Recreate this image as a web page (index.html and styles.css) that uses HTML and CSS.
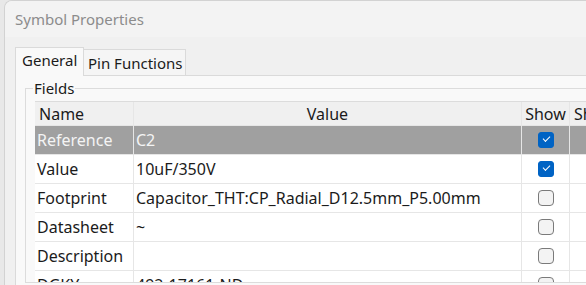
FILE: index.html
```html
<!DOCTYPE html>
<html lang="en">
<head>
  <meta charset="UTF-8" />
  <title>Symbol Properties</title>
  <link rel="stylesheet" href="styles.css">
</head>
<body>
  <div class="window">
    <div class="titlebar">Symbol Properties</div>

    <div class="content">
      <div class="tabs">
        <div class="tab active">General</div>
        <div class="tab">Pin Functions</div>
      </div>

      <div class="panel">
        <div class="group">
          <div class="legend">Fields</div>

          <div class="grid-wrap">
            <div class="grid">
              <div class="th th-left">Name</div>
              <div class="th">Value</div>
              <div class="th">Show</div>
              <div class="th th-left">Sh</div>

              <div class="td sel">Reference</div>
              <div class="td sel">C2</div>
              <div class="td sel center"><span class="check on"></span></div>
              <div class="td sel"></div>

              <div class="td">Value</div>
              <div class="td">10uF/350V</div>
              <div class="td center"><span class="check on"></span></div>
              <div class="td"></div>

              <div class="td">Footprint</div>
              <div class="td">Capacitor_THT:CP_Radial_D12.5mm_P5.00mm</div>
              <div class="td center"><span class="check"></span></div>
              <div class="td"></div>

              <div class="td">Datasheet</div>
              <div class="td">~</div>
              <div class="td center"><span class="check"></span></div>
              <div class="td"></div>

              <div class="td">Description</div>
              <div class="td"></div>
              <div class="td center"><span class="check"></span></div>
              <div class="td"></div>

              <div class="td">DGKY</div>
              <div class="td">492-17161-ND</div>
              <div class="td center"><span class="check"></span></div>
              <div class="td"></div>
            </div>
          </div>
        </div>
      </div>
    </div>
  </div>
</body>
</html>
```

FILE: styles.css
```css
body {
  margin: 0;
  background-color: #e8e8e8;
  font-family: "Noto Sans", "Open Sans", sans-serif;
  color: #1b1b1b;
  overflow: hidden;
}

.window {
  margin-left: 4px;
  height: 285px;
  background-color: #f0f0f0;
  border-left: 1px solid #d2d2d2;
  border-top: 1px solid #d2d2d2;
  border-top-left-radius: 8px;
  overflow: hidden;
}

.titlebar {
  height: 36px;
  line-height: 36px;
  padding-left: 10px;
  background-color: #f3f3f3;
  color: #8c8c8c;
  font-size: 15px;
}

.content {
  padding: 10px 0 0 10px;
}

/* tabs */
.tabs {
  display: flex;
  align-items: flex-end;
  height: 28px;
}

.tab {
  height: 25px;
  padding: 0 3px 0 4px;
  font-size: 15px;
  line-height: 26px;
  background-color: #f5f5f5;
  border: 1px solid #dadada;
  border-bottom: none;
  margin-left: -1px;
}

.tab.active {
  height: 28px;
  line-height: 24px;
  width: 61px;
  padding: 0 0 0 6px;
  margin-left: 0;
  background-color: #f9f9f9;
  position: relative;
  z-index: 1;
  margin-bottom: -1px;
}

.panel {
  background-color: #f9f9f9;
  border-top: 1px solid #dadada;
  border-left: 1px solid #dadada;
  padding: 12px 0 0 9px;
  height: 200px;
}

/* group box */
.group {
  border: 1px solid #dcdcdc;
  border-right: none;
  padding: 0 0 0 9px;
}

.legend {
  display: table;
  margin: -10px 0 0 -2px;
  padding: 0 1px;
  background-color: #f9f9f9;
  font-size: 15px;
  line-height: 18px;
}

.grid-wrap {
  margin-top: 4px;
  height: 181px;
  overflow: hidden;
}

.grid {
  display: grid;
  grid-template-columns: 98px 387px 47px 100px;
  grid-template-rows: 23px repeat(6, 28px);
  gap: 1px;
  background-color: #e6e6e6;
  border-top: 1px solid #dcdcdc;
  font-size: 16px;
}

.th {
  background-color: #f0f0f0;
  line-height: 24px;
  text-align: center;
  white-space: nowrap;
}

.th-left {
  text-align: left;
  padding-left: 4px;
}

.td {
  background-color: #ffffff;
  line-height: 28px;
  padding-left: 2px;
  white-space: nowrap;
  overflow: hidden;
}

.td.sel {
  background-color: #a0a0a0;
  color: #f4f4f4;
}

.td.center {
  display: flex;
  align-items: center;
  justify-content: center;
  padding-left: 0;
}

/* checkboxes */
.check {
  width: 14px;
  height: 14px;
  border: 1px solid #7a7a7a;
  border-radius: 4px;
  background-color: #f3f3f3;
  display: inline-block;
  position: relative;
}

.check.on {
  background-color: #0063c4;
  border-color: #0063c4;
  border-radius: 3px;
}

.check.on::after {
  content: "";
  position: absolute;
  left: 4px;
  top: 3px;
  width: 6px;
  height: 3px;
  border-left: 1.2px solid #ffffff;
  border-bottom: 1.2px solid #ffffff;
  transform: rotate(-45deg);
}
```
